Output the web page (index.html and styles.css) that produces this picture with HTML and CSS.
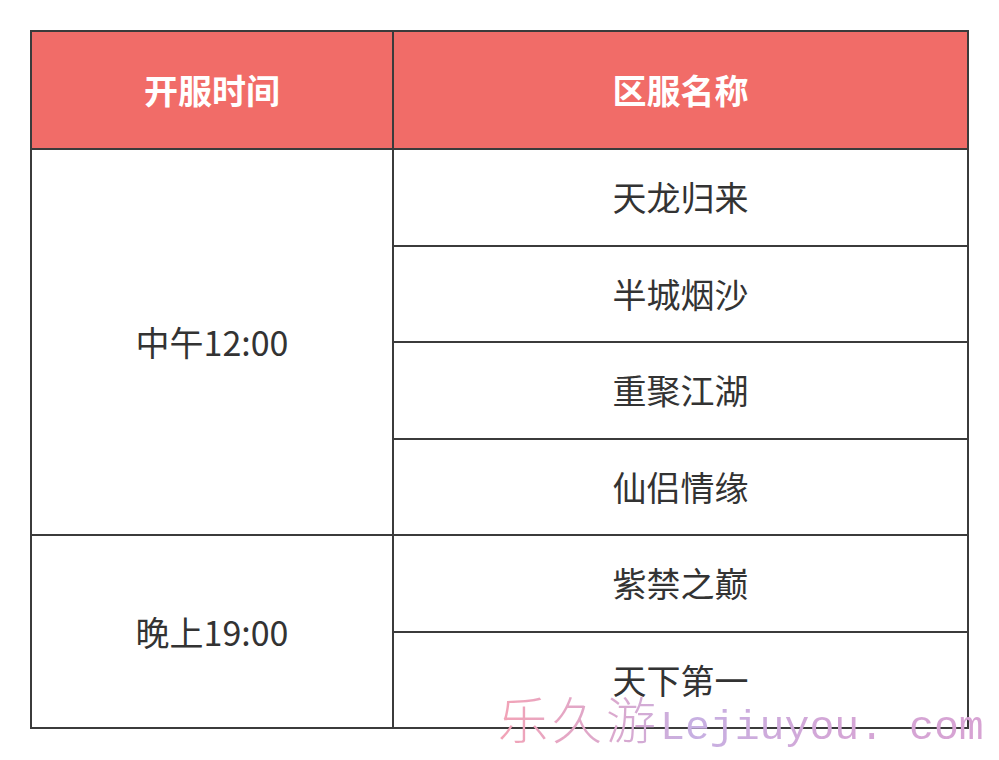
FILE: index.html
```html
<!DOCTYPE html>
<html lang="zh-CN">
<head>
<meta charset="utf-8">
<title>开服时间表</title>
<link rel="stylesheet" href="styles.css">
</head>
<body>
<div class="page">
  <div class="schedule">
    <div class="cell head">开服时间</div>
    <div class="cell head">区服名称</div>
    <div class="cell time span4">中午12:00</div>
    <div class="cell">天龙归来</div>
    <div class="cell">半城烟沙</div>
    <div class="cell">重聚江湖</div>
    <div class="cell">仙侣情缘</div>
    <div class="cell time span2">晚上19:00</div>
    <div class="cell">紫禁之巅</div>
    <div class="cell">天下第一</div>
  </div>
  <div class="watermark"><span class="wm-cjk">乐久游</span><span class="wm-latin">Lejiuyou. com</span></div>
</div>
</body>
</html>
```
FILE: styles.css
```css
html, body {
  margin: 0;
  padding: 0;
  background: #ffffff;
}

.page {
  position: relative;
  width: 999px;
  height: 760px;
  padding: 30px 0 0 30px;
  box-sizing: border-box;
}

.schedule {
  display: grid;
  width: 939px;
  grid-template-columns: 360px 573px;
  grid-template-rows: 116px repeat(6, 94.5px);
  gap: 2px;
  padding: 2px;
  box-sizing: border-box;
  background: #3b3b3b;
  font-family: "Noto Sans CJK SC", "Noto Sans", sans-serif;
}

.cell {
  display: flex;
  align-items: center;
  justify-content: center;
  background: #ffffff;
  color: #333333;
  font-size: 34px;
  line-height: 1;
}

.head {
  background: #f16c68;
  color: #ffffff;
  font-weight: 700;
  font-size: 34px;
}

.span4 {
  grid-row: span 4;
}

.span2 {
  grid-row: span 2;
}

.watermark {
  position: absolute;
  left: 498px;
  top: 692px;
  display: flex;
  align-items: baseline;
  white-space: pre;
  line-height: 1;
  background: linear-gradient(90deg, #f3a3b6 0%, #d9a9cf 25%, #c7b0e2 40%, #d4a6d6 70%, #d7a3d3 100%);
  -webkit-background-clip: text;
  background-clip: text;
  color: transparent;
}

.wm-cjk {
  font-family: "Noto Sans CJK SC", sans-serif;
  font-weight: 300;
  font-size: 50px;
  letter-spacing: 4px;
}

.wm-latin {
  font-family: "Liberation Mono", monospace;
  font-size: 41.5px;
}
```
